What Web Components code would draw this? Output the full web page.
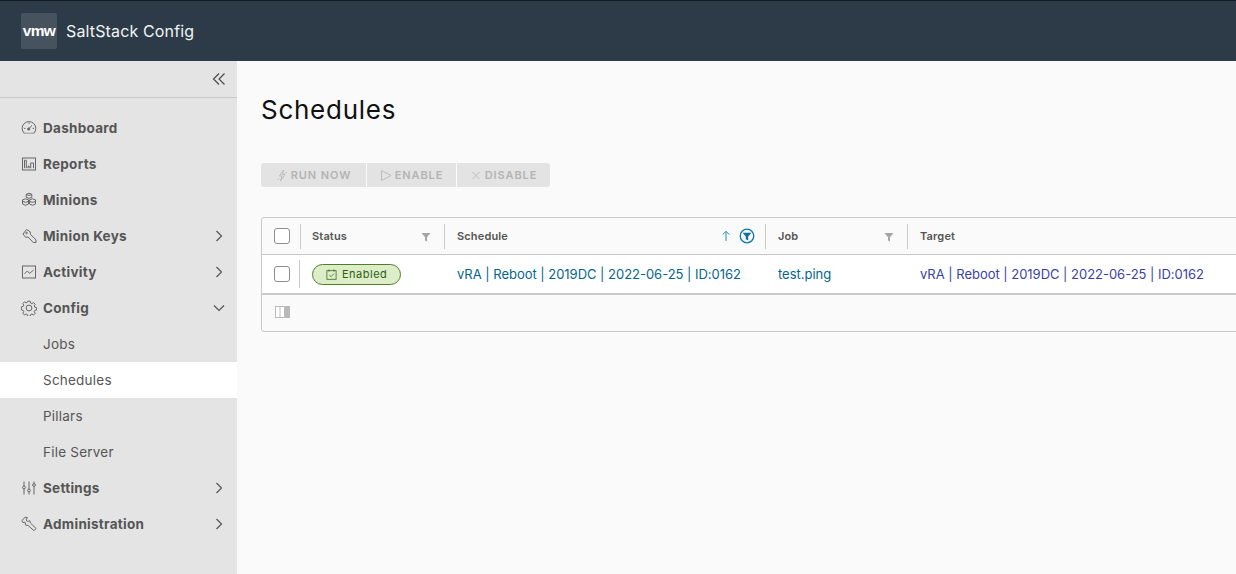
<!DOCTYPE html>
<html lang="en"><head><meta charset="utf-8"><title>Schedules</title>
<style>
html,body{margin:0;padding:0;height:574px;overflow:hidden;background:#fafafa}
body{font-family:Inter,"Noto Sans",sans-serif}
</style></head><body>
<salt-app></salt-app>
<script>
const ICONS={
dash:'<path d="M3.200 13.200A6.800 6.800 0 1 1 12.800 13.200"/><path d="M2.800 13.200h10.400" stroke-width=".6"/><path d="M7.700 8.800l3.300-3.300M3.100 8.400h1.300M11.700 8.400h1.300M8 2.500v1.300" /><circle cx="7.700" cy="9" r="1.100" fill="#666"/>',
rep:'<rect x="1.500" y="2" width="13" height="12"/><path d="M3.500 12.200V4.300h1.800v7.900M7 12.200v-2h1.200v2M9.700 12.200V7h2.800v5.200"/>',
min:'<path d="M8 1.200l2.800 1.100v3L8 6.400 5.200 5.300v-3zM5.200 2.400L8 3.500l2.800-1.100M4.500 6.800l3 1.100V12l-3 1.300-3-1.300V7.900zM11.500 6.800l3 1.100V12l-3 1.300-3-1.300V7.900zM1.500 9.300l3 1.100 3-1.100M8.500 9.300l3 1.100 3-1.100"/>',
key:'<path d="M2 6L5.500 1.500 9 3.600l.6 3L15 11.800V14.500H12.300L7 9 4.600 9.300z"/><circle cx="5.500" cy="5" r=".8"/>',
act:'<rect x="1.500" y="2" width="13" height="12"/><path d="M3.500 9.800l2.700-2.700 2.600 2.200 3.700-3.300"/>',
cfg:'<circle cx="8" cy="8" r="2.900"/><path d="M6.800 1.200h2.400l.4 1.800 1.300.6 1.600-1 1.700 1.700-1 1.600.6 1.300 1.800.4v2.400l-1.800.4-.6 1.300 1 1.600-1.700 1.700-1.600-1-1.300.6-.4 1.800H6.800l-.4-1.800-1.300-.6-1.600 1-1.700-1.700 1-1.600-.6-1.300-1.800-.4V6.800l1.800-.4.6-1.300-1-1.600 1.700-1.700 1.600 1 1.300-.6z"/>',
set:'<path d="M3 1.500v4.500M3 9v5.500M8 1.500v7.500M8 12v2.500M13 1.500v2M13 6.500v8"/><circle cx="3" cy="7.500" r="1.400"/><circle cx="8" cy="10.500" r="1.400"/><circle cx="13" cy="5" r="1.400"/>',
adm:'<path d="M1 4.500L4 1.200l2.400.4L5 4l1.300 1.500 2.500-.8.600 2.300 5.600 5.400-2 2.300L7 9.400l-2.200-.2L4 6.300 1.800 6.500z"/>'
};
function define(name,html){
  customElements.define(name,class extends HTMLElement{
    constructor(){super();const r=this.attachShadow({mode:'open'});r.innerHTML=html(this);}
  });
}
define('app-header',()=>`<style>
:host{display:flex;align-items:center;height:60px;background:#2d3b48;border-top:1px solid #15191d;padding-left:21px;gap:9px;color:#fff}
.logo{width:36px;height:36px;border-radius:2px;background:#46535f;display:flex;align-items:center;justify-content:center;font:700 15.500px/1 "Liberation Sans",sans-serif;letter-spacing:-.7px}
.t{font:400 16px/1 Inter,sans-serif;letter-spacing:.14px;color:#f2f4f5}
</style><div class="logo">vmw</div><span class="t">SaltStack Config</span>`);

define('nav-item',el=>{
  const ic=el.getAttribute('icon'),ch=el.getAttribute('chev'),sub=el.hasAttribute('sub'),act=el.hasAttribute('active');
  return `<style>
  :host{display:flex;align-items:center;height:36px;padding-left:21px;padding-right:10px;color:#555;font:${sub?400:700} 13.500px/1 Inter,sans-serif;letter-spacing:${sub?.22:.28}px;background:${act?'#fff':'transparent'};${sub?'padding-left:43px;color:#565656;':''}}
  .i{width:16px;height:16px;margin-right:6px;flex:none;fill:none;stroke:#666;stroke-width:1}
  .l{padding-top:2px}
  .c{margin-left:auto;width:16px;height:16px;fill:none;stroke:#555;stroke-width:1.200}
  </style>${ic?`<svg class="i" viewBox="0 0 16 16">${ICONS[ic]}</svg>`:''}<span class="l"><slot></slot></span>${ch?`<svg class="c" viewBox="0 0 16 16"><path d="${ch==='down'?'M3 5.500l5 5 5-5':'M5.500 3l5 5-5 5'}"/></svg>`:''}`;
});

define('side-nav',()=>`<style>
:host{display:block;width:237px;flex:none;background:#e4e4e4;height:513px}
.top{height:36px;border-bottom:1px solid #c8c8c8;display:flex;align-items:center;justify-content:flex-end;padding-right:11px}
svg{width:14px;height:14px;fill:none;stroke:#444;stroke-width:1.100}
.list{padding-top:12px}
</style><div class="top"><svg viewBox="0 0 14 14"><path d="M7 1.500L1.500 7 7 12.500M12.500 1.500L7 7l5.500 5.500"/></svg></div>
<div class="list"><slot></slot></div>`);

define('act-btn',el=>`<style>
:host{display:flex;align-items:center;justify-content:center;gap:3px;height:24px;width:${el.getAttribute('w')}px;background:#e3e3e3;color:#b4b4b4;font:600 11px/1 Inter,sans-serif;letter-spacing:.9px;text-transform:uppercase;flex:none}
:host([first]){border-radius:3px 0 0 3px} :host([last]){border-radius:0 3px 3px 0}
svg{width:12px;height:13px;fill:none;stroke:#b8b8b8;stroke-width:.9}
</style><svg viewBox="0 0 12 13">${el.getAttribute('ico')}</svg><slot></slot>`);

define('btn-bar',()=>`<style>:host{display:flex;gap:1px;margin-top:40px}</style><slot></slot>`);

define('check-box',()=>`<style>:host{display:block;width:16px;height:16px;box-sizing:border-box;border:1px solid #8f8f8f;border-radius:3px;background:#fff}</style>`);

define('status-pill',()=>`<style>
:host{display:inline-flex;align-items:center;box-sizing:border-box;width:89px;height:21px;border:1px solid #4f7d2d;border-radius:11px;background:#dcedc8;color:#2f5d12;font:400 11px/1 Inter,sans-serif;letter-spacing:.5px;padding-left:13px;gap:5px}
svg{width:11px;height:11px;fill:none;stroke:#3f6b1f;stroke-width:.8}
</style><svg viewBox="0 0 11 11"><rect x=".9" y="1.700" width="9.200" height="8.600"/><path d="M3 .4v2.300M8 .4v2.300M3.300 6l1.700 1.700 3-3"/></svg><slot></slot>`);

const FILTER='<svg class="f" viewBox="0 0 10 10" width="10" height="10"><path d="M.5 1h9L6 5.200V9.500L4 8.500V5.200z" fill="#a6a6a6"/></svg>';
define('grid-head',el=>{
  const w=el.getAttribute('w'),k=el.getAttribute('kind');
  let tail='';
  if(k==='filter')tail=FILTER;
  if(k==='sort')tail=`<svg width="10" height="12" viewBox="0 0 10 12" style="margin-right:8px;fill:none;stroke:#2d8ab4;stroke-width:1"><path d="M5 11V1.500M1.800 4.500L5 1.300l3.200 3.200"/></svg><svg width="16" height="16" viewBox="0 0 16 16"><circle cx="8" cy="8" r="6.800" fill="none" stroke="#0f77a8" stroke-width="1.300"/><path d="M3.600 4.800h8.800L9.200 8.500v4l-2.400-1.300V8.500z" fill="#0f6f9f"/></svg>`;
  return `<style>
  :host{display:flex;align-items:center;box-sizing:border-box;${w?`width:${w}px;flex:none;`:'flex:1;'}height:36px;position:relative;padding-left:12px;font:600 11px/1 Inter,sans-serif;color:#555;letter-spacing:.15px}
  :host([first]){padding-left:11px}
  :host([sep])::after{content:"";position:absolute;right:0;top:6px;bottom:5px;width:1px;background:#c9c9c9}
  .tail{margin-left:auto;display:flex;align-items:center;padding-right:${k==='sort'?11:14}px;padding-top:${k==='sort'?0:2}px}
  </style><slot></slot><span class="tail">${tail}</span>`;
});

define('grid-cell',el=>{
  const w=el.getAttribute('w');
  return `<style>
  :host{display:flex;align-items:center;box-sizing:border-box;${w?`width:${w}px;flex:none;`:'flex:1;'}height:38px;position:relative;padding-left:12px;font:400 13px/1 Inter,sans-serif;letter-spacing:-.02px;color:var(--c,#04658f);white-space:nowrap}
  :host([first]){padding-left:11px}
  </style><slot></slot>`;
});

define('data-grid',()=>`<style>
:host{display:block;margin-top:30px;margin-right:-3px;border:1px solid #c9c9c9;border-radius:3px 0 0 3px;box-sizing:border-box;height:115px}
.h,.r{display:flex}
.h{height:36px;border-bottom:1px solid #c9c9c9}
.r{height:38px;background:#fff;border-bottom:2px solid #c9c9c9}
.f{height:37px;box-sizing:border-box;padding:0 0 4px 13px;display:flex;align-items:center}
.cb{width:39px;flex:none;display:flex;align-items:center;padding-left:12px;box-sizing:border-box;position:relative}
.cb::after{content:"";position:absolute;right:0;top:6px;bottom:5px;width:1px;background:#c9c9c9}
.r .cb::after{top:5px;bottom:5px;right:1px}
</style>
<div class="h"><div class="cb"><check-box></check-box></div><slot name="h"></slot></div>
<div class="r"><div class="cb"><check-box></check-box></div><slot name="r"></slot></div>
<div class="f"><svg width="15" height="12" viewBox="0 0 15 12"><rect x=".5" y=".5" width="14" height="11" fill="#fff" stroke="#bbb"/><rect x="9.500" y="1" width="4.500" height="10" fill="#b8b8b8"/><path d="M5 1v10M9.500 1v10" stroke="#bbb"/></svg></div>`);

define('page-title',()=>`<style>:host{display:block;font:400 26px/1 Inter,sans-serif;letter-spacing:.73px;color:#111;margin-top:36px;height:26px}</style><slot></slot>`);
define('main-pane',()=>`<style>:host{display:block;flex:1;min-width:0;padding-left:24px;background:#fafafa;height:513px;overflow:hidden}</style><slot></slot>`);
define('salt-app',()=>`<style>:host{display:block;width:1236px;height:574px;overflow:hidden}.b{display:flex}</style>
<app-header></app-header>
<div class="b">
<side-nav>
<nav-item icon="dash">Dashboard</nav-item>
<nav-item icon="rep">Reports</nav-item>
<nav-item icon="min">Minions</nav-item>
<nav-item icon="key" chev="right">Minion Keys</nav-item>
<nav-item icon="act" chev="right">Activity</nav-item>
<nav-item icon="cfg" chev="down">Config</nav-item>
<nav-item sub>Jobs</nav-item>
<nav-item sub active>Schedules</nav-item>
<nav-item sub>Pillars</nav-item>
<nav-item sub>File Server</nav-item>
<nav-item icon="set" chev="right">Settings</nav-item>
<nav-item icon="adm" chev="right">Administration</nav-item>
</side-nav>
<main-pane>
<page-title>Schedules</page-title>
<btn-bar>
<act-btn first w="105" ico='<path d="M7.500 1L3.500 7H6L4.500 12l4.500-6.500H6.500zM10.500 3L9 4.500M3 9.500L1.500 11"/>'>Run Now</act-btn>
<act-btn w="89" ico='<path d="M1.500 1.500L11 6.500 1.500 11.500z"/>'>Enable</act-btn>
<act-btn last w="93" ico='<path d="M2.500 3l7 7M9.500 3l-7 7"/>'>Disable</act-btn>
</btn-bar>
<data-grid>
<grid-head slot="h" w="144" first sep kind="filter">Status</grid-head>
<grid-head slot="h" w="321" sep kind="sort">Schedule</grid-head>
<grid-head slot="h" w="142" sep kind="filter">Job</grid-head>
<grid-head slot="h">Target</grid-head>
<grid-cell slot="r" w="144" first><status-pill>Enabled</status-pill></grid-cell>
<grid-cell slot="r" w="321">vRA | Reboot | 2019DC | 2022-06-25 | ID:0162</grid-cell>
<grid-cell slot="r" w="142">test.ping</grid-cell>
<grid-cell slot="r" style="--c:#3a3fa8">vRA | Reboot | 2019DC | 2022-06-25 | ID:0162</grid-cell>
</data-grid>
</main-pane>
</div>`);
</script>
</body></html>
